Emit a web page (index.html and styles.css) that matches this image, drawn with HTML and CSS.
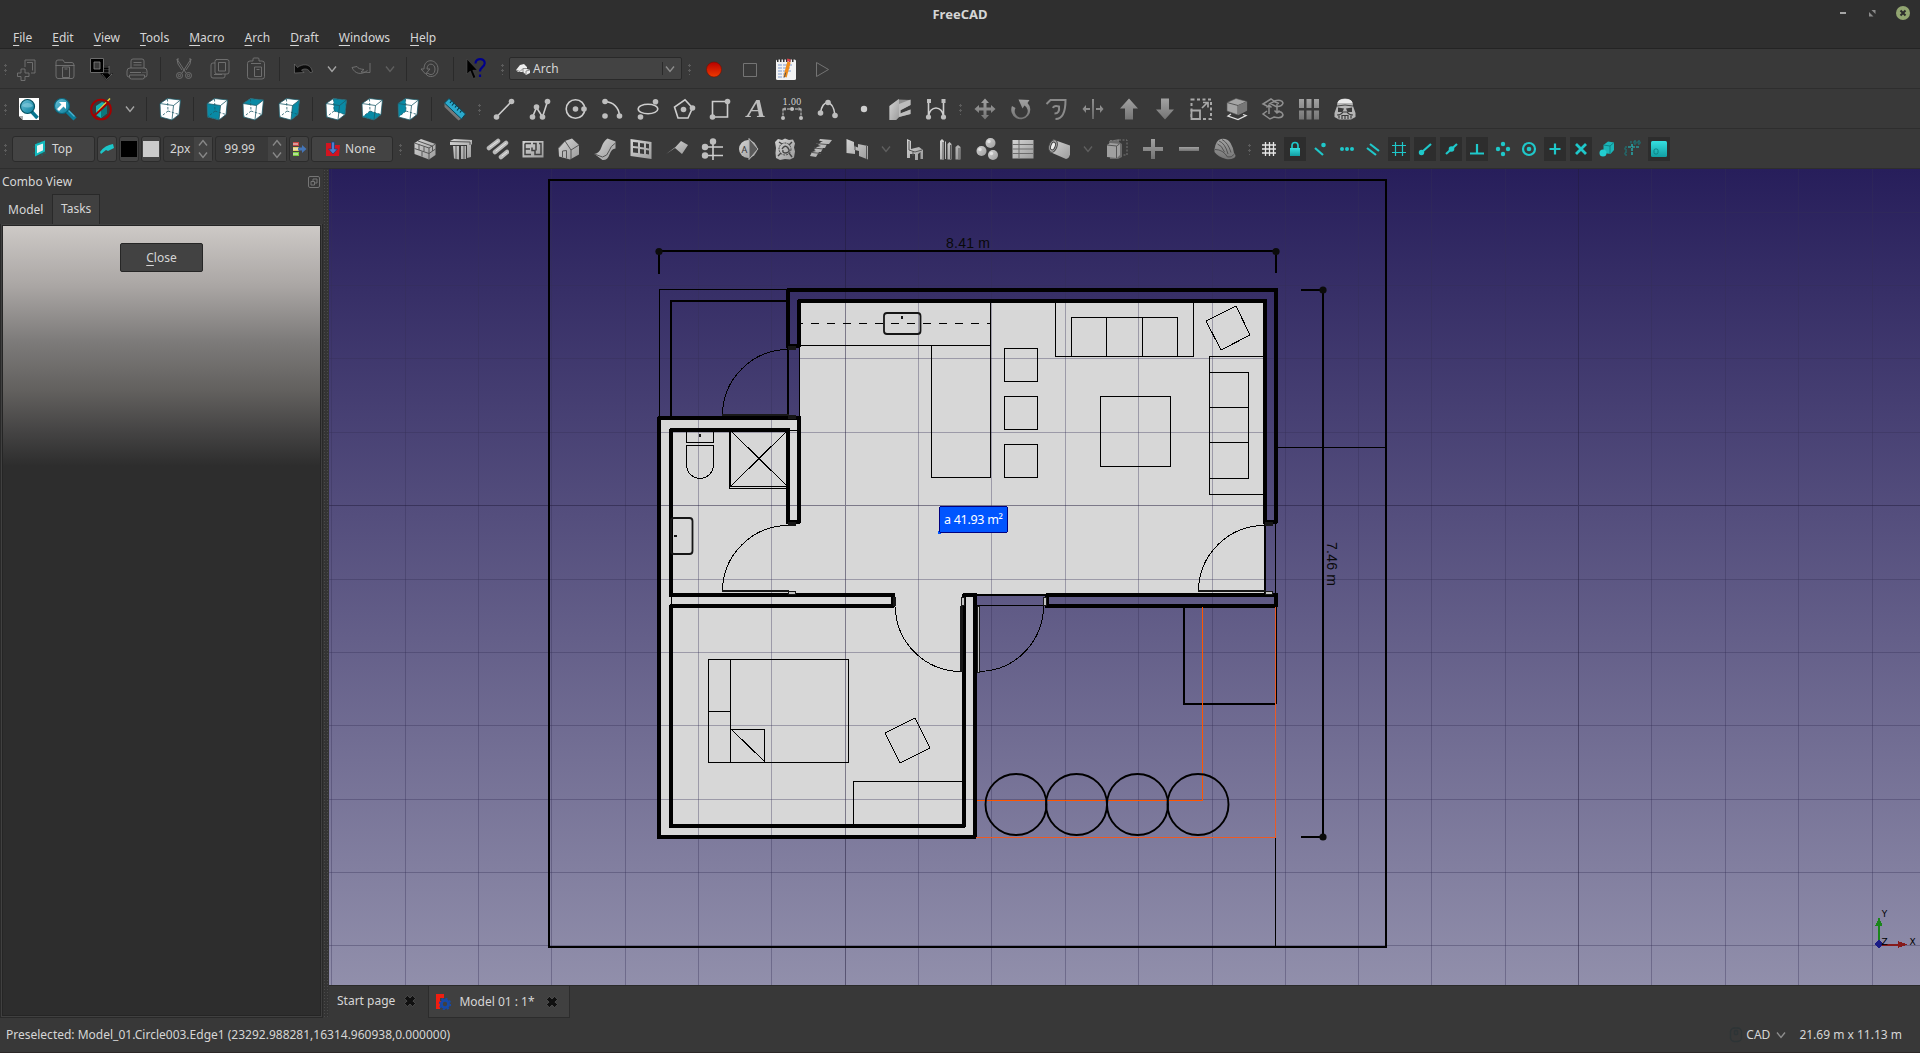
FILE: index.html
```html
<!DOCTYPE html>
<html lang="en">
<head>
<meta charset="utf-8">
<title>FreeCAD</title>
<link rel="stylesheet" href="styles.css">
</head>
<body>
<svg class="defs" width="0" height="0" aria-hidden="true">
  <defs>
    <linearGradient id="g" x1="0" y1="0" x2="1" y2="1"><stop offset="0" stop-color="#d4d4d4"/><stop offset="1" stop-color="#9c9c9c"/></linearGradient>
    <linearGradient id="d" x1="0" y1="0" x2="0" y2="1"><stop offset="0" stop-color="#a2a2a2"/><stop offset="1" stop-color="#747474"/></linearGradient>
    <linearGradient id="red" x1="0" y1="0" x2="0" y2="1"><stop offset="0" stop-color="#b80000"/><stop offset="1" stop-color="#ee3a00"/></linearGradient>
    <linearGradient id="teal" x1="0" y1="0" x2="0" y2="1"><stop offset="0" stop-color="#35dfe0"/><stop offset="1" stop-color="#129da2"/></linearGradient>
    <linearGradient id="lens" x1="0" y1="0" x2="1" y2="1"><stop offset="0" stop-color="#6fc3da"/><stop offset="1" stop-color="#067c99"/></linearGradient>
    <symbol id="cube" viewBox="0 0 24 24">
      <path d="M2 6.500L9.500 1.500 22.500 3l-1.500 14.500L14 23 2.500 20z" fill="#fff"/>
    </symbol>
    <symbol id="edges" viewBox="0 0 24 24">
      <g fill="none" stroke="#1d5a68" stroke-width=".8"><path d="M2 6.500L9.500 1.500 22.500 3l-1.500 14.500L14 23 2.500 20z"/><path d="M2 6.500l13.500 2 7-5.500M15.500 8.500L14 23"/><path d="M9.500 2l.5 12L2.500 20M10 14l11 3.500" stroke-dasharray="2.500 1.500" stroke-width=".8"/></g>
    </symbol>
    <symbol id="chev" viewBox="0 0 12 12"><path d="M2 3.500L6 8.500l4-5" fill="none" stroke="currentColor" stroke-width="1.400"/></symbol>
  </defs>
</svg>

<div class="window">
  <header class="titlebar">
    <span class="titlebar__text">FreeCAD</span>
    <div class="winbtns">
      <svg width="7" height="16"><rect x="0" y="7" width="6" height="2" fill="#a5a5a5"/></svg>
      <svg width="8" height="16"><path d="M2.500 5H6.500V9zM0 7v4.500H4.500z" fill="#8c8c8c"/></svg>
      <svg width="16" height="16"><circle cx="8" cy="8" r="7" fill="#92a571"/><path d="M5.500 5.500l5 5M10.500 5.500l-5 5" stroke="#2c2c2c" stroke-width="2"/></svg>
    </div>
  </header>
  <nav class="menubar">
    <span><u>F</u>ile</span><span><u>E</u>dit</span><span><u>V</u>iew</span><span><u>T</u>ools</span><span><u>M</u>acro</span><span><u>A</u>rch</span><span><u>D</u>raft</span><span><u>W</u>indows</span><span><u>H</u>elp</span>
  </nav>

  <div class="toolbar">
    <i class="grip grip--first"></i>
    <span class="tool"><svg viewBox="0 0 24 24" class="off"><path d="M8 10V3h10v13h-4M10 5.500h5.500v8M4 12h4v4h4v3.500H8v4H4v-4H.5V16H4z"/></svg></span>
    <span class="tool"><svg viewBox="0 0 24 24" class="off"><path d="M3 10V5q0-2 2-2h5l1.500 2.500H19q2 0 2 3V19q0 2.500-2 2.500H5q-2 0-2-2.500zM2.500 8.500h19M9.500 10h7v10.500h-7zM11.500 12h3"/></svg></span>
    <span class="tool"><svg viewBox="0 0 24 24"><path d="M3 3h10v11H3z" fill="none" stroke="#000" stroke-width="4"/><path d="M1.500 1.500h13v14h-13zM5 5h6v7H5z" fill="none" stroke="#888" stroke-width=".8"/><path d="M15 9h5M15 11.500h5M15 14h5M13 17h9l-4.500 5z" stroke="#000" stroke-width="1.600"/><path d="M14 9h6v8h3l-5.500 5.500L13 17" fill="none" stroke="#8a8a8a" stroke-width=".6"/></svg></span>
    <span class="tool"><svg viewBox="0 0 24 24" class="off"><path d="M6 11V4q0-2 2-2h9q2 0 2 2v7M8.500 5.500h8M8.500 8h8M4 20q-2 0-2-2v-4q0-3 3-3h14q3 0 3 3v4q0 2-2 2M5 15.500h11M4.500 18h15v2q0 2-2 2h-11q-2 0-2-2zM18 15v1M20 15v1"/></svg></span>
    <i class="sep"></i>
    <span class="tool"><svg viewBox="0 0 24 24" class="off"><path d="M5 2l9 14M7 2l-2 0 1 5 4 6M19 2l-9 14M17 2h2l-1 5-4 6"/><circle cx="7.500" cy="18.500" r="3"/><circle cx="16.500" cy="18.500" r="3"/><circle cx="7.500" cy="18.500" r="1.200"/><circle cx="16.500" cy="18.500" r="1.200"/></svg></span>
    <span class="tool"><svg viewBox="0 0 24 24" class="off"><path d="M8 2.500h11q2 0 2 2V15q0 2-2 2H9q-2 0-2-2V4.500q0-2 2-2zM10.500 5.500h7v8.500h-7zM7 6H5Q3 6 3 8v11q0 2 2 2h10q2 0 2-2v-2M6 17.500h8"/></svg></span>
    <span class="tool"><svg viewBox="0 0 24 24" class="off"><path d="M9 4V2q0-1 1-1h4q1 0 1 1v2h3q2.500 0 2.500 2.500v13Q20.500 22 18 22H6q-2.500 0-2.500-2.500v-13Q3.500 4 6 4zM7 6.500h10M10.500 10h7v9.500h-7zM12.500 12.500h3"/></svg></span>
    <i class="sep"></i>
    <span class="tool"><svg viewBox="0 0 24 24"><path d="M3.500 7l3 3.500c5-4 12-3.500 14 1.500l1 3-2.500.5c-1-3.500-5-4.500-8.500-2.500l2.500 2.500-9.500.5z" fill="#0a0a0a" stroke="#888" stroke-width=".5"/></svg></span>
    <span class="drop"><svg class="chev"><use href="#chev"/></svg></span>
    <span class="tool"><svg viewBox="0 0 24 24" class="off"><path d="M21 6v9.500l-9-.5 3-2.500c-4-.5-6-1-7-3l-5 1c3 7 10 7.500 15.500 3"/></svg></span>
    <span class="drop drop--off"><svg class="chev"><use href="#chev"/></svg></span>
    <i class="sep"></i>
    <span class="tool"><svg viewBox="0 0 24 24" class="off"><path d="M3 12h3C6 0 20 2 20 12c0 9-10 9-12 5l2-1c2 3 7 2 7-4 0-6-8-7-8 0h3l-4.500 5z"/></svg></span>
    <i class="sep"></i>
    <span class="tool"><svg viewBox="0 0 24 24"><path d="M2 2v15l3.300-3 3 7.500 2.500-1.200-3-7h4.700z" fill="#000" stroke="#555" stroke-width=".5"/><path d="M10.500 6.500c0-6 9.500-5.500 9.200-.3-.2 4-5 4-4.700 8.300M15 17.500v2.500" fill="none" stroke="#00008c" stroke-width="2.200"/></svg></span>
    <i class="grip grip--wide"></i>
    <div class="combo"><svg width="16" height="16" viewBox="0 0 16 16"><path d="M1 9l4-5 4-1 3 3v2l3 1v3l-4 2-3-3-5 0z" fill="#ededed"/><path d="M1 9l4 1.500 3-3 4 0M8 7.500l0 4 3 2 0-3.500 4-1" fill="none" stroke="#777" stroke-width=".8"/></svg><span>Arch</span><b></b><svg class="chev"><use href="#chev"/></svg></div>
    <i class="grip grip--wide"></i>
    <span class="tool"><svg viewBox="0 0 24 24"><circle cx="12" cy="12.500" r="7.500" fill="url(#red)" stroke="#701000" stroke-width=".6"/></svg></span>
    <span class="tool"><svg viewBox="0 0 24 24"><path d="M5.500 6.500h13v13h-13z" fill="none" stroke="#747474"/></svg></span>
    <span class="tool"><svg viewBox="0 0 24 24"><rect x="2" y="2.500" width="20" height="20.500" rx="1.500" fill="#f2f2f2"/><path d="M3 3.500h18" stroke="#333" stroke-width="3" stroke-dasharray="1.500 1.500"/><path d="M4 8h14M4 11h12M4 14h13M4 17h9M4 20h6" stroke="#7f9cd0" stroke-width="1" stroke-dasharray="4 1"/><path d="M11 20L15 5" stroke="#f08c1a" stroke-width="3.400"/><path d="M10.300 20.500l1.500-5" stroke="#555" stroke-width="1"/><path d="M14.500 4.500l.6-2.500" stroke="#d9434b" stroke-width="3.400"/></svg></span>
    <span class="tool"><svg viewBox="0 0 24 24"><path d="M6.500 5.500v14L18.500 12.500z" fill="none" stroke="#747474"/></svg></span>
  </div>

  <div class="toolbar">
    <i class="grip grip--first"></i>
    <span class="tool"><svg viewBox="0 0 24 24"><path d="M2 1h20v22H6l-4-4z" fill="#fff"/><path d="M2 19h4v4z" fill="#aaa"/><path d="M14 14l6.500 7" stroke="#0a7690" stroke-width="3.600"/><circle cx="10.500" cy="9.500" r="7" fill="url(#lens)" stroke="#06505f" stroke-width="1.200"/><path d="M5 9a6 5 0 0 1 11 0q-5 3-11 0z" fill="#9bd8e6" opacity=".5"/></svg></span>
    <span class="tool"><svg viewBox="0 0 24 24"><path d="M14 14l8 8" stroke="#0a7f9c" stroke-width="4.500"/><path d="M15 13l6.500 6.500" stroke="#4fb0cd" stroke-width="1.300"/><circle cx="9" cy="9" r="7.500" fill="url(#lens)" stroke="#0a6479" stroke-width="1.200"/><path d="M6 5h7v7l-2.500-2.500L6 14l-2-2 4.500-4.500z" fill="#fff"/></svg></span>
    <span class="tool"><svg viewBox="0 0 24 24"><path d="M7 9l6-4 5 2v9l-6 5-5-3z" fill="#15b0b5"/><path d="M12 10l6-4v10l-6 5z" fill="#0a777c"/><path d="M21 1.500L9 14" stroke="#e4d23c" stroke-width="1.500"/><circle cx="12" cy="12.500" r="9.900" fill="none" stroke="#a30000" stroke-width="1.900"/><path d="M5 19L19 6" stroke="#a30000" stroke-width="1.900"/></svg></span>
    <span class="drop"><svg class="chev"><use href="#chev"/></svg></span>
    <i class="sep"></i>
    <span class="tool"><svg><use href="#cube"/><use href="#edges"/></svg></span>
    <i class="sep"></i>
    <span class="tool"><svg viewBox="0 0 24 24"><use href="#cube"/><path d="M2 6.500l13.500 2L14 23 2.500 20z" fill="#098aa5"/><use href="#edges"/></svg></span>
    <span class="tool"><svg viewBox="0 0 24 24"><use href="#cube"/><path d="M2 6.500l7.500-5 13 1.500-7 5.500z" fill="#098aa5"/><use href="#edges"/></svg></span>
    <span class="tool"><svg viewBox="0 0 24 24"><use href="#cube"/><path d="M15.500 8.500l7-5.500-1.500 14.500L14 23z" fill="#098aa5"/><use href="#edges"/></svg></span>
    <i class="sep"></i>
    <span class="tool"><svg viewBox="0 0 24 24"><use href="#cube"/><path d="M9.500 1.500l13 1.500-1.500 14.500L10 14z" fill="#098aa5"/><use href="#edges"/></svg></span>
    <span class="tool"><svg viewBox="0 0 24 24"><use href="#cube"/><path d="M2.500 20l7.500-6 11 3.500-7 5.500z" fill="#098aa5"/><use href="#edges"/></svg></span>
    <span class="tool"><svg viewBox="0 0 24 24"><use href="#cube"/><path d="M2 6.500l7.500-5L10 14l-7.500 6z" fill="#098aa5"/><use href="#edges"/></svg></span>
    <i class="sep"></i>
    <span class="tool"><svg viewBox="0 0 24 24"><path d="M1.500 6v4l14 13.500 4-2.500" fill="#777"/><path d="M1.500 6L6 1.500 22.500 17 18.500 22z" fill="#2ba9cc" stroke="#07485a"/><path d="M8.500 4L7 6M11 6l-2 2.500M13.500 8.500L12 10.500M16 11l-2 2.500M18.500 13.500L17 15.500" stroke="#063844" stroke-width="1.200"/></svg></span>
    <i class="grip"></i>
    <span class="tool"><svg viewBox="0 0 24 24" class="ln"><path d="M4.500 20L19.500 4.500"/><g><circle cx="4.500" cy="20" r="2.800"/><circle cx="19.500" cy="4.500" r="2.800"/></g></svg></span>
    <span class="tool"><svg viewBox="0 0 24 24" class="ln"><path d="M4.500 20L8.500 10.500 14.500 20 19.500 4.500"/><g><circle cx="4.500" cy="20" r="2.800"/><circle cx="8.500" cy="10" r="2.800"/><circle cx="14.500" cy="20" r="2.800"/><circle cx="19.500" cy="4.500" r="2.800"/></g></svg></span>
    <span class="tool"><svg viewBox="0 0 24 24" class="ln"><circle cx="11.500" cy="12" r="9.300"/><g><circle cx="11.500" cy="12" r="2.800"/><circle cx="20" cy="12" r="2.800"/></g></svg></span>
    <span class="tool"><svg viewBox="0 0 24 24" class="ln"><path d="M5 4.500C13 5 19 10 19.500 19"/><g><circle cx="5" cy="4.500" r="2.800"/><circle cx="5" cy="19" r="2.800"/><circle cx="19.500" cy="19" r="2.800"/></g></svg></span>
    <span class="tool"><svg viewBox="0 0 24 24" class="ln"><ellipse cx="12" cy="12" rx="9.800" ry="4.800"/><g><circle cx="19.500" cy="4.800" r="2.800"/><circle cx="4.500" cy="20" r="2.800"/></g></svg></span>
    <span class="tool"><svg viewBox="0 0 24 24" class="ln"><path d="M13 2.800L20.500 11 16 21H6L2.500 10z"/><g><circle cx="11.500" cy="12.500" r="2.800"/><circle cx="20.500" cy="11" r="2.800"/></g></svg></span>
    <span class="tool"><svg viewBox="0 0 24 24" class="ln"><path d="M4.500 4.500h15V20h-15z"/><g><circle cx="4.500" cy="20" r="2.800"/><circle cx="19.500" cy="4.500" r="2.800"/></g></svg></span>
    <span class="tool"><i class="glyph">A</i></span>
    <span class="tool"><svg viewBox="0 0 24 24" class="ln thin"><path d="M3 11.500v9M21 11.500v9M3 12h18M5 10.500v3M19 10.500v3"/><g><circle cx="12" cy="12" r="2"/><circle cx="3" cy="21" r="2"/><circle cx="21" cy="21" r="2"/></g><text x="12" y="8">1.00</text></svg></span>
    <span class="tool"><svg viewBox="0 0 24 24" class="ln"><path d="M4.500 16C6 2 17 2 19 18"/><g><circle cx="4.500" cy="16" r="2.800"/><circle cx="12" cy="5.500" r="2.800"/><circle cx="19" cy="18.500" r="2.800"/></g></svg></span>
    <span class="tool"><svg viewBox="0 0 24 24"><circle cx="12" cy="12" r="3.200" fill="#cfcfcf"/></svg></span>
    <span class="tool"><svg viewBox="0 0 24 24"><path d="M1.500 9L10 2.500l12.500.5V8L13 13v3.500l9.500-4v4.500L11 20l-3 3H1.500z" fill="#8f8f8f"/><path d="M1.500 9L11 2l0 18-3 3H1.500z" fill="url(#g)"/><path d="M11 7l11.500-4.500V8L12 13.500v3l10.500-4V17L11 20z" fill="#bdbdbd"/></svg></span>
    <span class="tool"><svg viewBox="0 0 24 24" class="ln"><path d="M4.500 5v15M19.500 5v15M4.500 20C5 8 19 8 19.500 20"/><g><circle cx="4.500" cy="20" r="2.600"/><circle cx="19.500" cy="20" r="2.600"/><path d="M3 2h4v4H3zM17.500 2h4v4h-4z"/></g></svg></span>
    <i class="grip"></i>
    <span class="tool dim"><svg viewBox="0 0 24 24"><path d="M12 1.500l4 4.500h-2.500v4.500H18V8l4.500 4L18 16v-2.500h-4.500V18H16l-4 4.500L8 18h2.500v-4.500H6V16l-4.500-4L6 8v2.500h4.500V6H8z"/></svg></span>
    <span class="tool dim"><svg viewBox="0 0 24 24"><path d="M3 9a9.500 9.500 0 1 0 15.500-3l2-3-11-.5 4 9 2-3A6.500 6.500 0 1 1 6.500 11z"/></svg></span>
    <span class="tool"><svg viewBox="0 0 24 24"><path d="M1.500 7L5.500 3h15q0 19-10 19M8 11q1-3 6-1.500 1 7-4.500 7" fill="none" stroke="#8b8b8b" stroke-width="2"/></svg></span>
    <span class="tool dim"><svg viewBox="0 0 24 24"><path d="M11.200 2h1.600v20h-1.600zM1.500 12L5 8v3h4v2H5v3zM22.500 12L19 8v3h-4v2h4v3z"/></svg></span>
    <span class="tool dim"><svg viewBox="0 0 24 24"><path d="M12 1.500l9 10h-5V22.500H8V11.500H3z"/></svg></span>
    <span class="tool dim"><svg viewBox="0 0 24 24"><path d="M12 22.500l9-10h-5V1.500H8V12.500H3z"/></svg></span>
    <span class="tool"><svg viewBox="0 0 24 24" fill="none" stroke="#a9a9a9"><path d="M2.500 2.500h19.500v19.500H2.500z" stroke-width="2" stroke-dasharray="3 2.500"/><path d="M2.500 13.500h8.500V22H2.500z" fill="#393939" stroke-width="1.800"/><path d="M13 11l5-5M14 5.500h5v5" stroke-width="1.700"/></svg></span>
    <span class="tool"><svg viewBox="0 0 24 24"><path d="M2 5.500L11 1.500l11 3v9l-9 4.500L2 14z" fill="#a5a5a5" stroke="#555" stroke-width=".6"/><path d="M2 5.500l11 3 9-4M13 8.500V18" stroke="#4d4d4d" fill="none" stroke-width=".9"/><path d="M13 8.500l9-4v9L13 18z" fill="#777"/><path d="M6 17l-3 2 10 3.500 8-4-3-1" fill="none" stroke="#e0e0e0" stroke-width="1.300"/></svg></span>
    <span class="tool"><svg viewBox="0 0 24 24" fill="none" stroke="#8f8f8f" stroke-width="1.500"><path d="M6 9L2 7l8-5 3 2q8-2 9 2-1 4-7 3.500l-6-3 4-2 5 2M6 14l-4 3 7 5 4-2q8 2 9-2-1-4-5-3"/><path d="M8 8v9M5.500 10.500L8 8l2.500 2.500M16 7v9M13.500 13.500L16 16l2.500-2.500"/></svg></span>
    <span class="tool dim"><svg viewBox="0 0 24 24"><path d="M2 2h5v9H2zM9.500 2h5v9h-5zM17 2h5v9h-5zM2 13.500h5v9H2zM9.500 13.500h5v9h-5zM17 13.500h5v9h-5z"/></svg></span>
    <span class="tool"><svg viewBox="0 0 24 24"><path d="M4 9Q4 1.500 12 1.500T20 9l2.500 7v4L18 22.500H6L1.500 20v-4z" fill="#b5b5b5"/><path d="M4.500 6Q5 2 12 2t7.500 4z" fill="#e9e9e9"/><path d="M4 9q8-2 16 0" stroke="#444" stroke-width="1" fill="none"/><path d="M5 10.500l6 1-1.500 3.500H5zM19 10.500l-6 1 1.500 3.500H19z" fill="#3b3b3b"/><path d="M4 18q4 0 6-3h4q2 3 6 3M9 22v-3.500h6V22M12 18v4M6 18.500v3M18 18.500v3" fill="none" stroke="#3b3b3b" stroke-width="1.200"/></svg></span>
  </div>

  <div class="toolbar">
    <i class="grip grip--first"></i>
    <div class="draftbar">
      <span class="btn btn--plane"><svg width="14" height="18" viewBox="0 0 14 18"><path d="M5 1v13M9 1v15M0 7h13M0 13h13" stroke="#156d70" stroke-width=".8"/><path d="M3 5l8-3v9l-8 4z" fill="#e7f7f6" stroke="#12b9bd" stroke-width="2"/></svg>Top</span>
      <span class="btn btn--sq"><svg width="16" height="12" viewBox="0 0 16 12"><path d="M1 9q5-7 13-8l1 4-6 3-2-1-5 4z" fill="#1cc6c9"/></svg></span>
      <span class="btn btn--sq"><em class="swatch swatch--black"></em></span>
      <span class="btn btn--sq"><em class="swatch swatch--light"></em></span>
      <span class="spin spin--px"><span>2px</span><b><svg class="chev up"><use href="#chev"/></svg><svg class="chev"><use href="#chev"/></svg></b></span>
      <span class="spin spin--num"><span>99.99</span><b><svg class="chev up"><use href="#chev"/></svg><svg class="chev"><use href="#chev"/></svg></b></span>
      <span class="btn btn--sq"><svg width="16" height="16" viewBox="0 0 16 16"><path d="M2 1h6v4H2z" fill="#c84545"/><path d="M2 6h6v4H2z" fill="#e3cf6b"/><path d="M2 11h6v4H2z" fill="#79d03c"/><path d="M2 3h5M2 8h5M2 13h5" stroke="#eee"/><path d="M7 6.500h4V4l4.500 4-4.500 4V9.500H7z" fill="#4475b7"/></svg></span>
      <span class="btn btn--none"><svg width="16" height="16" viewBox="0 0 16 16"><path d="M1 2h5l1 2h8l-1 11H1z" fill="#d31420"/><path d="M6.500 1h3v7h3L8 13 3.500 8h3z" fill="#4b7fd0" stroke="#1d3c73" stroke-width=".7"/></svg>None</span>
    </div>
    <i class="grip"></i>
    <span class="tool gray"><svg viewBox="0 0 24 24"><path d="M1.500 6L8 2l14.500 5v11L16 22.500 1.500 17z"/><path d="M1.500 6l14.500 5 6.500-4M1.500 11.500L16 16.500l6.500-4.500M16 11v11.500M6 7.500V13M11 9.500v5M9 14.500v5M19.500 9v5M5 4l14 5" class="k"/></svg></span>
    <span class="tool gray"><svg viewBox="0 0 24 24"><path d="M1 4l4-2 18 1v4l-1 1H1zM4 9h6v13.500l-5-1zM12 9h5v13h-5zM18 8h4v12l-4 1z"/><path d="M1 4.500l20 .5v3M7 9v13M15 9v13" class="k"/></svg></span>
    <span class="tool gray"><svg viewBox="0 0 24 24" fill="none" stroke="#b9b9b9" stroke-width="4.500" stroke-linecap="round"><path d="M4 11L13 4M10 15l11-9M16 20l6-5"/><path d="M5 10l8-6M11 14l10-8M17 19l5-4" stroke="#e6e6e6" stroke-width="1"/></svg></span>
    <span class="tool gray"><svg viewBox="0 0 24 24"><path d="M1.500 4H22.500v16.500H1.500z"/><path d="M4 6.500v11h6M4 12h5M4 6.500h6M12 6.500h3v7M18 6.500h2v11h-6v-4h-3v-3" fill="none" stroke="#404040" stroke-width="1.500"/></svg></span>
    <span class="tool gray"><svg viewBox="0 0 24 24"><path d="M1.500 11L8 4l7-2.500L22 8v9.500L13 22.500l-11-3z"/><path d="M1.500 11L8 4l6 9v9M14 13l8-5M5.500 20v-6l4-.5V21.500" class="k"/></svg></span>
    <span class="tool gray"><svg viewBox="0 0 24 24"><path d="M1.500 17q5-1 7-7t6-8.500l8 3v7q-4 0-6 6t-7 5.500z"/><path d="M1.500 17l8 3q5-1 6.500-6t6.500-8" class="k"/></svg></span>
    <span class="tool gray"><svg viewBox="0 0 24 24"><path d="M1.500 2l21 3v17l-21-3zM4 5v4l5 .5v-4zM11 6v4l4 .5v-4zM17 6.500V11l3 .5V7zM4 11v4.500l5 .5v-4.500zM11 12v4.500l4 .5v-4.500zM17 13v4l3 .5V13.500z" fill-rule="evenodd"/></svg></span>
    <span class="tool gray"><svg viewBox="0 0 24 24"><path d="M10.500 10L16 4l7 4-6 9-7-6-9 6z"/></svg></span>
    <span class="tool"><svg viewBox="0 0 24 24" class="ln"><path d="M4 10h18M4 18.500h18M12 4v19"/><g><circle cx="12" cy="4.500" r="3.200"/><circle cx="4" cy="10" r="3.200"/><circle cx="4" cy="18.500" r="3.200"/></g></svg></span>
    <span class="tool gray"><svg viewBox="0 0 24 24"><circle cx="11" cy="12" r="9"/><path d="M12 1.500L21 12l-9 10.500z" fill="#5a5a5a" stroke="#b8b8b8"/><text x="7.500" y="15.500" class="atxt">A</text></svg></span>
    <span class="tool gray"><svg viewBox="0 0 24 24"><path d="M2 5l3-3 4 1 3-1.500L16 3l4-.5 2 4-1 4 1 4-1 6-4 2-5-.5-5 1-4-2-.5-5 .5-5z"/><circle cx="12" cy="12" r="6" fill="none" stroke="#444" stroke-dasharray="2 1"/><path d="M6 5l3 2M19 5l-3 3M5 19l3-3M19 20l-3-4M9 12q3-5 6-1t-2 5q-4 0-3-3" stroke="#444" fill="none" stroke-width="1.400"/></svg></span>
    <span class="tool gray"><svg viewBox="0 0 24 24"><path d="M11 2l12 1-3 4h-2l-2 4h-2l-2 4h-2l-3 5-6-1 2-4 4-1-2-1 3-3 4-1-3-1 3-3 2-.5-4-1z"/><path d="M7 6.500l11 1M5 11l9 1M3 15.500l9 1" class="k"/></svg></span>
    <span class="tool gray"><svg viewBox="0 0 24 24"><path d="M1.500 2L9 5v4l4 1.500V7L23 9v13.500L14 19v-5l-4-1v4L1.500 16z"/><path d="M9 9l1-.5V13M21.500 9v13" class="k"/></svg></span>
    <span class="drop drop--off"><svg class="chev"><use href="#chev"/></svg></span>
    <span class="tool gray"><svg viewBox="0 0 24 24"><path d="M4 2l4 2v8l8-2 4 3v9h-2.500v-7L15 17v6h-3v-6l-5 0v4H4z"/><path d="M6 4v9l6 2 7-2M10 14v5" class="k"/></svg></span>
    <span class="tool gray"><svg viewBox="0 0 24 24"><path d="M1 22.500V4l2-2 2 2v18.500zM8.500 22.500V7l2-2 2 2v15.500zM16.500 22.500V10l2.500-2 2.500 2v12.500zM6 22V5l1-1v18z"/><path d="M4 5v17M11.500 8v14M20 11v11" class="k"/></svg></span>
    <span class="tool gray"><svg viewBox="0 0 24 24"><circle cx="15.500" cy="6" r="5"/><circle cx="6.500" cy="14" r="5"/><circle cx="18" cy="18" r="5"/><g fill="#f0f0f0" opacity=".7"><circle cx="14" cy="4.500" r="1.700"/><circle cx="5" cy="12.500" r="1.700"/><circle cx="16.500" cy="16.500" r="1.700"/></g></svg></span>
    <span class="tool gray"><svg viewBox="0 0 24 24"><path d="M1.500 3h21v18.500h-21z"/><path d="M1.500 7.500h21M1.500 12h21M1.500 16.500h21M8 3v18.500" stroke="#6d6d6d" stroke-width="1"/></svg></span>
    <span class="tool gray"><svg viewBox="0 0 24 24"><path d="M6 2.500l17 6v9q-1 4-4 4.500l-16-7z"/><ellipse cx="6" cy="9" rx="4" ry="6.500" transform="rotate(20 6 9)" fill="#aaa" stroke="#444" stroke-width="1"/><ellipse cx="6" cy="9" rx="2.200" ry="4" transform="rotate(20 6 9)" fill="#eee" stroke="#444"/></svg></span>
    <span class="drop drop--off"><svg class="chev"><use href="#chev"/></svg></span>
    <span class="tool dim"><svg viewBox="0 0 24 24"><path d="M4 4l10-2v3l3 2v13l-4 2H5z" fill="#6a6a6a"/><path d="M2 8l3-2 10 1v11l-3 3-10-1z" fill="#a0a0a0"/><path d="M2 8l9.500 1 3-2M11.500 9V21" fill="none" stroke="#555"/><path d="M5 3.500h9M14 3h8v15h-5" fill="none" stroke="#777" stroke-dasharray="2 1.500"/></svg></span>
    <span class="tool dim"><svg viewBox="0 0 24 24"><path d="M10 2h4v8h8v4h-8v8h-4v-8H2v-4h8z"/></svg></span>
    <span class="tool dim"><svg viewBox="0 0 24 24"><path d="M2 10h20v4H2z"/></svg></span>
    <span class="tool dim"><svg viewBox="0 0 24 24"><path d="M1.500 12Q3 3 8 2q6-1 9.500 4 3 5 3.500 10 3 3 0 5-4 2-8 1-8-2-11.500-7z"/><path d="M2 12.500q8 0 12.500 7.500 4 1 7-3M6 4q6 2 9 13M9 2.500q6 3 9 13M4.500 7q4 1 7 8" fill="none" stroke="#4c4c4c" stroke-width=".9"/></svg></span>
    <i class="grip"></i>
    <span class="snap"><svg viewBox="0 0 20 20"><path d="M6.500 3v14M10.500 3v14M14.500 3v14M3 6h14M3 10h14M3 14h14" stroke="#e6e6e6" stroke-width="1.300"/></svg></span>
    <span class="snap on"><svg viewBox="0 0 20 20"><path d="M5 9h10v8H5z" fill="url(#teal)"/><path d="M7 9V6.500q0-3 3-3t3 3V9" fill="none" stroke="#1fc8ca" stroke-width="1.700"/></svg></span>
    <span class="snap"><svg viewBox="0 0 20 20" class="t"><path d="M4 9l8 7"/><circle cx="12.500" cy="6" r="2.300"/></svg></span>
    <span class="snap"><svg viewBox="0 0 20 20" class="t"><circle cx="5" cy="10" r="2"/><circle cx="10" cy="10" r="2"/><circle cx="15" cy="10" r="2"/></svg></span>
    <span class="snap"><svg viewBox="0 0 20 20" class="t"><path d="M7 5l9 7M4 9l9 7"/></svg></span>
    <span class="snap on"><svg viewBox="0 0 20 20" class="t h"><path d="M6.500 3v14M13.500 3v14M3 6.500h14M3 13.500h14"/></svg></span>
    <span class="snap on"><svg viewBox="0 0 20 20" class="t"><path d="M16 5l-9 8"/><circle cx="6.500" cy="13.500" r="2.700"/></svg></span>
    <span class="snap on"><svg viewBox="0 0 20 20" class="t"><path d="M16 5L5 15"/><circle cx="10.500" cy="10" r="2.800"/></svg></span>
    <span class="snap on"><svg viewBox="0 0 20 20" class="t"><path d="M3 14.500h14M10 5v9"/></svg></span>
    <span class="snap"><svg viewBox="0 0 20 20" class="t"><circle cx="10" cy="5" r="2.200"/><circle cx="10" cy="15" r="2.200"/><circle cx="5" cy="10" r="2.200"/><circle cx="15" cy="10" r="2.200"/></svg></span>
    <span class="snap"><svg viewBox="0 0 20 20" class="t"><path class="ring" d="M10 4a6 6 0 0 1 0 12a6 6 0 0 1 0-12z"/><circle cx="10" cy="10" r="2.300"/></svg></span>
    <span class="snap on"><svg viewBox="0 0 20 20" class="t"><path d="M10 4.500v11M4.500 10h11"/></svg></span>
    <span class="snap on"><svg viewBox="0 0 20 20" class="t w"><path d="M5 5l10 10M15 5L5 15"/></svg></span>
    <span class="snap"><svg viewBox="0 0 20 20"><path d="M6.500 6L11 2.500l6 1V11l-3.500 4-7-1z" fill="#1bb5b8"/><path d="M6.500 6l6.500 1 4-3.500M13 7v8" stroke="#0a7477" fill="none" stroke-width=".8"/><circle cx="6" cy="14" r="3.500" fill="#22cdd0"/></svg></span>
    <span class="snap"><svg viewBox="0 0 20 20" fill="none" stroke="#168286" stroke-width="1"><path d="M8 2v3M11 2h2v3h-2zM15 2h2v3h-2zM4 8H2v3h2M4 13H2v3h2" stroke-dasharray="2 .6"/><path d="M5 8h12M9 5v12" stroke="#22c6c9" stroke-width="1.200" stroke-dasharray="3 1"/></svg></span>
    <span class="snap on"><svg viewBox="0 0 20 20"><rect x="2" y="2" width="16" height="16" rx="1.500" fill="url(#teal)"/><rect x="5" y="10" width="4" height="5" rx="1.500" fill="none" stroke="#0d8083"/></svg></span>
  </div>

  <main class="body">
    <aside class="dock">
      <div class="dock__title"><span>Combo View</span><svg width="12" height="12" viewBox="0 0 12 12" fill="none" stroke="#757575"><rect x=".5" y=".5" width="11" height="11" rx="1.500"/><path d="M3 5.500h3.500V9H3zM5 5V3h4v4H7"/></svg></div>
      <div class="dock__tabs"><span class="dtab">Model</span><span class="dtab dtab--on">Tasks</span></div>
      <div class="dock__frame"><div class="tasks"><button class="close"><u>C</u>lose</button></div></div>
    </aside>
    <div class="splitter"></div>
    <section class="mdi">
      <svg class="view" viewBox="329 169 1591 816" width="1591" height="816">
        <defs>
          <linearGradient id="sky" x1="0" y1="0" x2="0" y2="1"><stop offset="0" stop-color="#271e5b"/><stop offset="1" stop-color="#918fab"/></linearGradient>
        </defs>
        <rect x="329" y="169" width="1591" height="816" fill="url(#sky)"/>
        <path class="floor" d="M800 301H1265V595H975V837H659V418H800z"/>
        <g class="grid">
          <path d="M331.500 169V985M405.500 169V985M478.500 169V985M551.500 169V985M625.500 169V985M698.500 169V985M771.500 169V985M918.500 169V985M991.500 169V985M1065.500 169V985M1138.500 169V985M1212.500 169V985M1285.500 169V985M1358.500 169V985M1431.500 169V985M1505.500 169V985M1651.500 169V985M1725.500 169V985M1798.500 169V985M1872.500 169V985"/>
          <path d="M329 212.500H1920M329 285.500H1920M329 358.500H1920M329 432.500H1920M329 579.500H1920M329 652.500H1920M329 725.500H1920M329 799.500H1920M329 872.500H1920M329 945.500H1920"/>
          <path class="major" d="M845.500 169V985M1578.500 169V985M329 505.500H1920"/>
        </g>
        <g class="ink">
          <path class="w2" d="M549 180H1386V947H549zM659 251H1276M659 251V274M1276 251V272.500M1323 290V837M1301 290H1323M1301 837H1323"/>
          <path class="w1" d="M1277 447.500H1385M1275.500 837V947"/>
          <path class="w4" d="M788 290H1276V522H1265V301H799V346H788zM659 418H799V522H788V430H671V595H893V606H671V826H964V595H975V837H659z"/>
          <path class="w4" d="M1047 595H1276V606H1047z"/>
          <path class="gapline" d="M671 597V604"/>
          <path class="w1" d="M671.500 595V606M788 430.500H800M659.500 418V289.500H788M799.500 346V418M976 605.500H1047M1275.500 523V594"/>
          <path class="w2" d="M671 418V301H788M788 346V418M976 595H1047M1265 523V595"/>
          <path class="w1" d="M801 345.500H990.500M990.500 302V477.500H931.500V345.500"/>
          <path class="w1" d="M801 323.500H990" stroke-dasharray="8 8" stroke-dashoffset="6"/>
          <path class="w1" d="M1004.500 348.500H1037.500V381.500H1004.500zM1004.500 396.500H1037.500V429.500H1004.500zM1004.500 444.500H1037.500V477.500H1004.500z"/>
          <path class="w1" d="M1055.500 301V356.500H1193.500V301M1071.500 356V317.500H1177.500V356M1106.500 317V356M1142.500 317V356"/>
          <path class="w1" d="M1100.500 396.500H1170.500V466.500H1100.500zM1264 356.500H1209.500V494.500H1264M1209.500 372.500H1248.500V478.500H1209.500M1209.500 407.500H1248M1209.500 442.500H1248"/>
          <path class="w1" d="M1206 321L1236 306 1250 335 1221 350zM885 733L915 718 930 748 900 763z"/>
          <path class="w1" d="M708.500 659.500H848.500V762.500H708.500zM730.500 659V762M709 711.500H731M730.500 729.500H764.500V762M731 729L765 762M963 781.500H853.500V825"/>
          <path class="w1" d="M686.500 430V442.500H713.500V430M686.500 445.500H713.500V464C713.500 483 686.500 483 686.500 464zM788 486.500H730V430M730 430L788 487M788 430L730 487M729 488.500H789M729.500 430V488"/>
          <path class="w1" d="M722.500 415A66 66 0 0 1 788 349.500M722.500 591A66 66 0 0 1 788 525.500M1198.500 591A66 66 0 0 1 1265 525.500M895.500 607A66 65 0 0 0 961 671.500M1043.500 606A65 66 0 0 1 979 671.500"/>
          <path class="leaf" d="M722.500 414.500H788.500V415.500H722.500zM788.500 415.500H795.500V418.500H788.500zM722.500 590.500H788.500V591.500H722.500zM788.500 591.500H795.500V594.500H788.500zM1198.500 590.500H1265.500V591.500H1198.500zM1265.500 591.500H1272.500V594.500H1265.500zM977.500 606.500H979.500V672.500H977.500zM1043.500 597.500H1046.500V605.500H1043.500zM961.500 597.500H964.500V605.500H961.500z"/>
          <path class="jamb" d="M788 346H796V350H788zM788 522H796V526H788zM1265 522H1273V526H1265zM960 606H963V672H960zM893 597H896V606H893zM788 415H796V418H788z"/>
          <rect class="round" x="884" y="313" width="36.500" height="21" rx="3"/><rect class="round" x="671" y="518" width="21.500" height="36" rx="3"/>
          <path class="jamb" d="M901 316H903V319H901zM699 434H701V437H699zM674 535H677V537H674z"/>
          <path class="w2" d="M1184 607V704H1276"/><path class="w1" d="M1276.500 607V704"/>
        </g>
        <g class="orange"><path d="M977 800.500H1202.500V607"/><path class="thinner" d="M976 837.500H1275.500V607"/></g>
        <g class="ink"><circle cx="1016" cy="804.500" r="30.500"/><circle cx="1076.500" cy="804.500" r="30.500"/><circle cx="1137.500" cy="804.500" r="30.500"/><circle cx="1198" cy="804.500" r="30.500"/></g>
        <g class="dots"><circle cx="659" cy="251.500" r="3.600"/><circle cx="1276" cy="251.500" r="3.600"/><circle cx="1323" cy="290" r="3.600"/><circle cx="1323" cy="837" r="3.600"/></g>
        <text class="dim-text" x="968" y="248" textLength="44">8.41 m</text>
        <text class="dim-text" transform="translate(1327 564) rotate(90)" textLength="44">7.46 m</text>
        <path d="M938 531h3v3h-3z" fill="#05f"/>
        <rect x="939.500" y="506.500" width="68" height="26" rx="2" fill="#05f" stroke="#00007f"/>
        <text class="area-text" x="944" y="524" textLength="59">a 41.93 m²</text>
        <path d="M1879 944V924" stroke="#1b861b" stroke-width="2"/><path d="M1879 917l3.500 8.500h-7z" fill="#1b861b"/>
        <path d="M1879 944.500H1900" stroke="#861b1b" stroke-width="2"/><path d="M1907.500 944.500l-9.500 3.500v-7z" fill="#861b1b"/>
        <path d="M1879 939.500l4 4.500-4 4.500-4-4.500z" fill="#1b1b86"/>
        <g class="axis-text"><text x="1884.500" y="917">Y</text><text x="1884.500" y="945">Z</text><text x="1912.500" y="945">X</text></g>
      </svg>
      <div class="mditabs">
        <span class="mtab">Start page<svg class="x" viewBox="0 0 12 12"><path d="M2 2l8 8M10 2l-8 8"/></svg></span>
        <span class="mtab mtab--on"><svg width="16" height="16" viewBox="0 0 16 16"><path d="M1 0h8v4H5v3h3v3H5v5H1z" fill="#f01e10"/><circle cx="10" cy="10" r="3.600" fill="none" stroke="#1649a8" stroke-width="2.800"/><circle cx="10" cy="10" r="5.400" fill="none" stroke="#1649a8" stroke-width="1.600" stroke-dasharray="2.100 2.100"/></svg><em>Model 01 : 1*</em><svg class="x" viewBox="0 0 12 12"><path d="M2 2l8 8M10 2l-8 8"/></svg></span>
      </div>
    </section>
  </main>
  <footer class="status"><span>Preselected: Model_01.Circle003.Edge1 (23292.988281,16314.960938,0.000000)</span>
    <div class="status__right"><svg width="14" height="16" viewBox="0 0 14 16" fill="none" stroke="#2d3436" stroke-width="1.500"><rect x="1.500" y="1" width="11" height="13.500" rx="4"/><rect x="5.500" y="3.500" width="3" height="4" rx="1"/></svg><span>CAD</span><svg class="chev"><use href="#chev"/></svg><span class="dims">21.69 m x 11.13 m</span></div>
  </footer>
</div>
</body>
</html>
```
FILE: styles.css
```css
* { box-sizing: border-box; }
body { margin: 0; background: #383838; color: #d6d6d6; font: 12px/18px "Noto Sans", sans-serif; overflow: hidden; }
.defs { position: absolute; }
.window { display: flex; flex-direction: column; width: 1920px; height: 1053px; border-bottom: 1px solid #2b2828; }
u { text-decoration: underline; text-decoration-thickness: 1px; text-underline-offset: 3px; }
i, em { font-style: normal; }
svg { display: block; flex: none; }

.titlebar { height: 25px; background: #2f2f2f; display: grid; grid-template-columns: 1fr auto 1fr; align-items: center; padding-top: 2px; }
.titlebar__text { grid-column: 2; font-weight: 700; font-size: 13px; }
.winbtns { display: flex; justify-content: flex-end; align-items: center; gap: 22px; padding-right: 9px; margin-top: -1px; }
.winbtns svg:last-child { margin-left: -4px; }
.menubar { height: 24px; background: #2f2f2f; border-bottom: 1px solid #242424; display: flex; gap: 20px; padding: 4px 0 0 13px; }

.toolbar { height: 40px; display: flex; align-items: center; border-bottom: 1px solid #2e2e2e; background: #393939; }
.tool { width: 36px; display: flex; justify-content: center; }
.tool svg { width: 24px; height: 24px; }
.sep { width: 11px; height: 24px; background: linear-gradient(#2a2a2a, #2a2a2a) center / 1px 100% no-repeat; }
.grip { width: 13px; height: 12px; background: radial-gradient(circle, #5c5c5c 1px, transparent 1.300px) center top / 13px 5px repeat-y; }
.grip--first { width: 11px; background-size: 11px 5px; }
.grip--wide { width: 14px; }
.drop { width: 22px; display: flex; justify-content: center; color: #a4a4a4; }
.drop--off { color: #5f5f5f; }
.chev { width: 12px; height: 12px; }
.up { transform: scaleY(-1); }
.off { fill: none; stroke: #747474; stroke-width: .9; }
.combo { width: 173px; height: 23px; border: 1px solid #292929; border-radius: 2px; background: #434343; display: flex; align-items: center; padding-left: 5px; }
.combo span { flex: 1; padding-left: 2px; }
.combo b { width: 1px; height: 13px; background: #2a2a2a; }
.combo .chev { margin: 0 5px 0 1px; color: #8d8d8d; }

.ln { fill: none; stroke: #cecece; stroke-width: 1.600; }
.ln g { fill: #bebebe; stroke: none; }
.ln text { font: 8.500px "DejaVu Serif", serif; fill: #d0d0d0; stroke: none; text-anchor: middle; }
.thin { stroke-width: 1; stroke-dasharray: 3 1; }
.glyph { font: italic 700 25px/24px "Liberation Serif", serif; color: #bdbdbd; transform: scaleX(1.150); }
.dim svg { fill: url(#d); }
.gray svg { fill: url(#g); }
.k { fill: none; stroke: #555; stroke-width: 1; }
.atxt { font: 9px "Noto Sans", sans-serif; fill: #333; text-anchor: middle; }

.draftbar { width: 383px; padding: 0 1px; display: flex; align-items: center; gap: 2px; height: 26px; }
.btn { height: 26px; display: flex; align-items: center; justify-content: center; background: #434343; border: 1px solid #2b2b2b; border-radius: 3px; }
.btn--plane { width: 84px; gap: 5px; padding-right: 2px; }
.btn--sq { width: 20px; }
.btn--none { width: 83px; gap: 4px; padding-right: 3px; }
.swatch { width: 16px; height: 16px; flex: none; }
.swatch--black { background: #000; }
.swatch--light { background: #cbcbcb; }
.spin { height: 26px; display: flex; align-items: center; border: 1px solid #2c2c2c; border-radius: 3px; background: #393939; }
.spin span { flex: 1; text-align: center; }
.spin b { width: 18px; height: 24px; background: #434343; display: flex; flex-direction: column; align-items: center; justify-content: space-between; color: #888; }
.spin .chev { width: 12px; height: 12px; }
.spin--px { width: 51px; }
.spin--px span { padding-left: 2px; }
.spin--num { width: 72px; }
.spin--num span { padding-right: 5px; }

.snap { width: 26px; height: 26px; display: flex; align-items: center; justify-content: center; }
.snap svg { width: 20px; height: 20px; }
.on { background: linear-gradient(#2d2d2d, #2d2d2d) center / 22px 24px no-repeat; }
.t { stroke: #1fc8ca; stroke-width: 2.200; fill: #1fc8ca; }
.t circle { stroke: none; }
.ring { fill: none; }
.h { stroke-width: 1.200; }
.w { stroke-width: 2.800; }

.body { flex: 1; display: flex; min-height: 0; }
.dock { width: 323px; display: flex; flex-direction: column; background: #383838; }
.dock__title { height: 25px; display: flex; justify-content: space-between; align-items: center; padding: 0 3px 0 2px; }
.dock__tabs { height: 30px; display: flex; align-items: flex-end; }
.dtab { width: 52px; height: 27px; padding-left: 8px; line-height: 25px; }
.dtab--on { width: 48px; height: 30px; line-height: 28px; background: #404040; border: 1px solid #292929; border-bottom: 0; padding-left: 8px; }
.dock__frame { height: 794px; border: 1px solid #292929; border-top: 0; background: #404040; padding: 1px; }
.tasks { height: 791px; border: 1px solid #252525; padding-top: 17px; background: linear-gradient(#cdc9c6 0, #aaa6a4 60px, #7d7b7a 115px, #62605e 165px, #454444 205px, #2d2d2d 240px); }
.close { display: block; margin: 0 auto; width: 83px; height: 29px; background: #424242; border: 1px solid #262626; border-radius: 2px; color: inherit; font: inherit; padding: 0; }
.splitter { width: 6px; height: 848px; background: radial-gradient(circle, #4b4b4b .8px, transparent 1px) 0 0 / 3px 3px, #343434; }

.mdi { width: 1591px; display: flex; flex-direction: column; }
.view { shape-rendering: crispEdges; }
.floor { fill: #d7d7d7; }
.grid { fill: none; stroke: #353055; stroke-width: 1; stroke-opacity: .36; }
.major { stroke: #221c3c; stroke-opacity: .5; }
.ink { fill: none; stroke: #000; }
.ink circle { stroke-width: 1.900; shape-rendering: auto; }
.w1 { stroke-width: 1; }
.w2 { stroke-width: 2; }
.w4 { stroke-width: 4; stroke-linejoin: round; }
.gapline { stroke: #d7d7d7; stroke-width: 4; }
.leaf { stroke: #181818; stroke-width: 1; fill: #c4c4c4; }
.jamb { fill: #161616; stroke: none; }
.round { stroke: #161616; stroke-width: 1.800; shape-rendering: auto; }
.orange { fill: none; stroke: #ff5500; }
.thinner { stroke: #ec5a24; }
.dots { fill: #0b0b0b; shape-rendering: auto; }
.dim-text { font: 14px "Liberation Sans", sans-serif; fill: #090909; text-anchor: middle; }
.area-text { font: 12.500px "Noto Sans", sans-serif; fill: #fff; }
.axis-text { font: 9px "DejaVu Sans", sans-serif; fill: #000; text-anchor: middle; }

.mditabs { height: 33px; border-top: 1px solid #2a2a2a; display: flex; }
.mtab { width: 99px; display: flex; align-items: center; justify-content: space-between; padding: 0 12px 2px 8px; height: 32px; }
.mtab--on { width: 142px; background: #404040; border: 1px solid #2c2c2c; border-top: 0; padding: 0 11px 0 6px; }
.mtab--on em { margin-left: -3px; }
.x { width: 12px; height: 12px; fill: none; stroke: #101010; stroke-width: 4; filter: drop-shadow(0 0 .6px #bbb); }

.status { height: 34px; display: flex; justify-content: space-between; padding: 8px 18px 0 6px; }
.status__right { display: flex; align-items: center; height: 18px; }
.status__right span:nth-child(2) { margin: 0 5px 0 3px; }
.status__right .chev { color: #8d8d8d; }
.status__right .dims { margin-left: 12px; }
```
